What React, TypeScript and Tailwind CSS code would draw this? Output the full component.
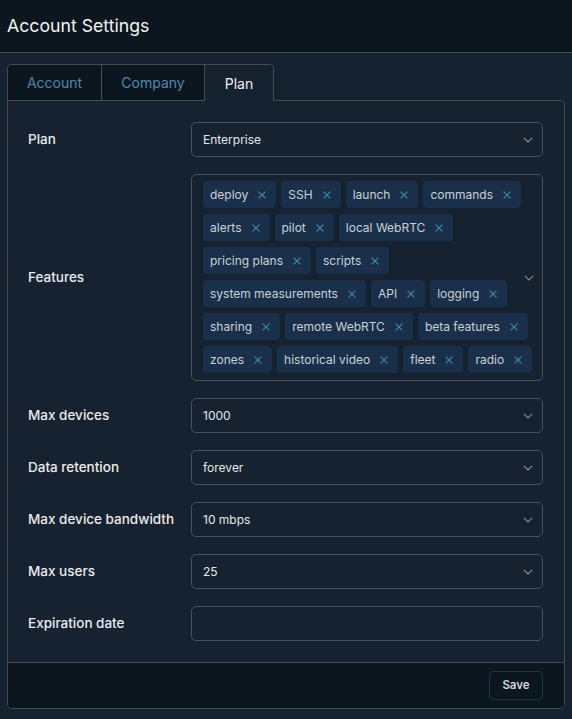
import { useState } from 'react';

const features = [
  'deploy',
  'SSH',
  'launch',
  'commands',
  'alerts',
  'pilot',
  'local WebRTC',
  'pricing plans',
  'scripts',
  'system measurements',
  'API',
  'logging',
  'sharing',
  'remote WebRTC',
  'beta features',
  'zones',
  'historical video',
  'fleet',
  'radio',
];

const Chevron = () => (
  <svg width="10" height="6" viewBox="0 0 10 6" fill="none" className="shrink-0">
    <polyline points="0.8,0.8 5,5 9.2,0.8" stroke="#6f9499" strokeWidth="1.1" />
  </svg>
);

const Cross = () => (
  <svg width="8" height="8" viewBox="0 0 8 8" fill="none" className="shrink-0">
    <path d="M0.6 0.6 L7.4 7.4 M7.4 0.6 L0.6 7.4" stroke="#3f87ad" strokeWidth="1.2" />
  </svg>
);

const Select = ({ value }: { value: string }) => (
  <div className="flex h-[35px] flex-1 items-center justify-between rounded-[5px] border border-[#4a5159] pl-[11px] pr-[9px] text-[12px] text-[#e4e7ea]">
    <span>{value}</span>
    <Chevron />
  </div>
);

const Row = ({ label, children }: { label: string; children: React.ReactNode }) => (
  <div className="flex items-center">
    <div className="w-[163px] shrink-0 text-[13.5px] font-medium text-[#e9ebed]">{label}</div>
    {children}
  </div>
);

export default function App() {
  const [tab, setTab] = useState('Plan');
  const tabs = [
    { name: 'Account', w: 'w-[94px]' },
    { name: 'Company', w: 'w-[103px]' },
    { name: 'Plan', w: 'w-[68px]' },
  ];

  return (
    <div
      className="min-h-[719px] bg-[#172230]"
      style={{ fontFamily: 'Inter, "Noto Sans", sans-serif' }}
    >
      <header className="flex h-[53px] items-center border-b border-[#474c53] bg-[#0b161f] px-[7px]">
        <h1 className="text-[17.7px] text-[#f2f4f6]">Account Settings</h1>
      </header>

      <div className="px-[7px] pt-[11px] pb-[11px]">
        <div className="relative z-10 -mb-px flex w-fit overflow-hidden rounded-t-[5px] border border-b-0 border-[#474c53]">
          {tabs.map((t, i) => {
            const active = t.name === tab;
            return (
              <button
                key={t.name}
                onClick={() => setTab(t.name)}
                className={
                  'h-[36px] text-center text-[14px] ' +
                  t.w +
                  ' ' +
                  (i < tabs.length - 1 ? 'border-r border-r-[#474c53] ' : '') +
                  (active
                    ? 'bg-[#172230] text-[#eef0f2]'
                    : 'border-b border-b-[#474c53] bg-[#0b161f] text-[#4b8bb0]')
                }
              >
                {t.name}
              </button>
            );
          })}
        </div>

        <div className="overflow-hidden rounded-b-[5px] rounded-tr-[5px] border border-[#474c53]">
          <div className="flex flex-col gap-[17px] px-[20px] py-[21px] pr-[21px]">
            <Row label="Plan">
              <Select value="Enterprise" />
            </Row>

            <Row label="Features">
              <div className="relative flex-1 rounded-[5px] border border-[#4a5159] pt-[6px] pb-[7px] pl-[11px] pr-[6px]">
                <div className="flex flex-wrap gap-x-[5px] gap-y-[6px]">
                  {features.map((f) => (
                    <span
                      key={f}
                      className="flex h-[27px] items-center gap-[10px] rounded-[4px] bg-[#1a304a] pl-[7px] pr-[10px] text-[12px] text-[#c9d0d7]"
                    >
                      {f}
                      <Cross />
                    </span>
                  ))}
                </div>
                <div className="absolute top-1/2 right-[8px] -translate-y-1/2">
                  <Chevron />
                </div>
              </div>
            </Row>

            <Row label="Max devices">
              <Select value="1000" />
            </Row>
            <Row label="Data retention">
              <Select value="forever" />
            </Row>
            <Row label="Max device bandwidth">
              <Select value="10 mbps" />
            </Row>
            <Row label="Max users">
              <Select value="25" />
            </Row>
            <Row label="Expiration date">
              <div className="h-[35px] flex-1 rounded-[5px] border border-[#4a5159]" />
            </Row>
          </div>

          <div className="flex h-[46px] items-center justify-end border-t border-[#474c53] bg-[#0b161f] pr-[21px]">
            <button className="h-[29px] w-[54px] rounded-[4px] border border-[#1f334b] text-[11.5px] font-semibold text-[#d3d7db]">
              Save
            </button>
          </div>
        </div>
      </div>
    </div>
  );
}
